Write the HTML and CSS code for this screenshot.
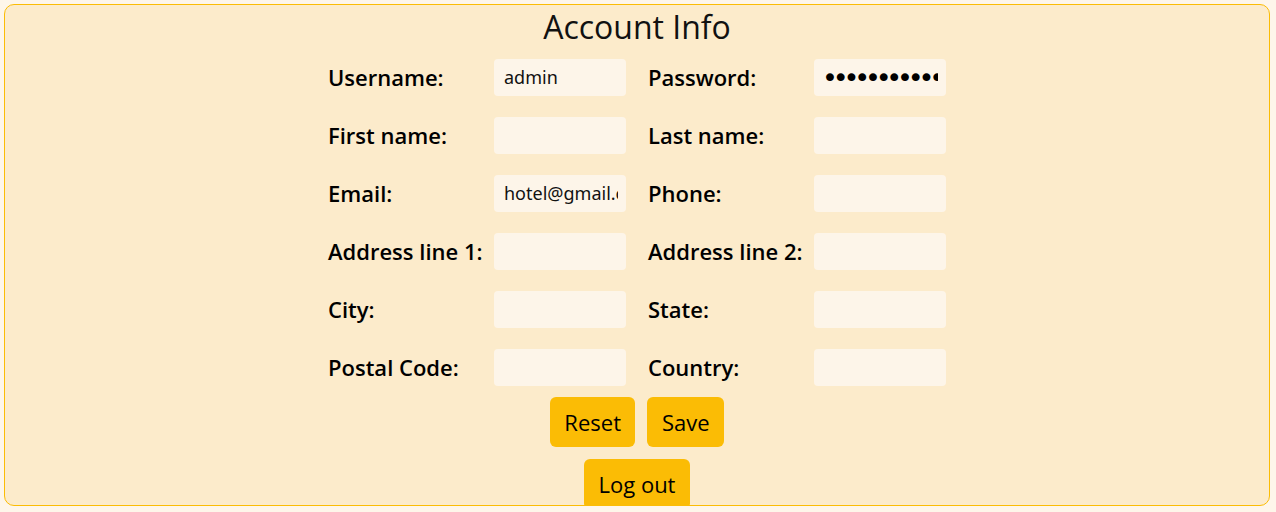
FILE: index.html
```html
<!DOCTYPE html>
<html lang="en">
<head>
<meta charset="utf-8">
<title>Account Info</title>
<link rel="stylesheet" href="styles.css">
</head>
<body>
<main class="card">
  <h1 class="title">Account Info</h1>
  <form class="form">
    <div class="grid">
      <label class="label" for="username">Username:</label>
      <input class="input" id="username" type="text" value="admin">
      <label class="label" for="password">Password:</label>
      <input class="input input-secret" id="password" type="password" value="admin1234567890">

      <label class="label" for="first">First name:</label>
      <input class="input" id="first" type="text">
      <label class="label" for="last">Last name:</label>
      <input class="input" id="last" type="text">

      <label class="label" for="email">Email:</label>
      <input class="input" id="email" type="text" value="hotel@gmail.com">
      <label class="label" for="phone">Phone:</label>
      <input class="input" id="phone" type="text">

      <label class="label" for="addr1">Address line 1:</label>
      <input class="input" id="addr1" type="text">
      <label class="label" for="addr2">Address line 2:</label>
      <input class="input" id="addr2" type="text">

      <label class="label" for="city">City:</label>
      <input class="input" id="city" type="text">
      <label class="label" for="state">State:</label>
      <input class="input" id="state" type="text">

      <label class="label" for="postal">Postal Code:</label>
      <input class="input" id="postal" type="text">
      <label class="label" for="country">Country:</label>
      <input class="input" id="country" type="text">
    </div>
    <div class="actions actions-first">
      <button class="btn" type="reset">Reset</button>
      <button class="btn" type="button">Save</button>
    </div>
    <div class="actions">
      <button class="btn" type="button">Log out</button>
    </div>
  </form>
</main>
</body>
</html>
```
FILE: styles.css
```css
html, body {
  background: #fef6ea;
}
body {
  margin: 4px;
  font-family: "Open Sans", "Noto Sans", sans-serif;
  color: #000;
}
.card {
  box-sizing: border-box;
  width: 1266px;
  height: 502px;
  background: #fcebcb;
  border: 1px solid #fbbc05;
  border-radius: 10px;
  overflow: hidden;
  display: flex;
  flex-direction: column;
  align-items: center;
}
.title {
  margin: 0;
  font-size: 32px;
  font-weight: 400;
  line-height: 44px;
  color: #111;
}
.form {
  display: flex;
  flex-direction: column;
  align-items: center;
  margin-top: -1px;
}
.grid {
  display: grid;
  grid-template-columns: 166px 154px 166px 132px;
  grid-auto-rows: 58px;
  align-items: center;
}
.label {
  font-size: 22px;
  font-weight: 600;
  line-height: 30px;
  white-space: nowrap;
}
.input {
  box-sizing: border-box;
  width: 132px;
  height: 37px;
  border: none;
  outline: none;
  border-radius: 4px;
  background: #fdf5e9;
  padding: 0 8px 0 10px;
  font-family: "Noto Sans", "Open Sans", sans-serif;
  font-size: 18px;
  color: #111;
}
.input-secret {
  font-family: "DejaVu Sans", sans-serif;
  font-size: 27px;
  letter-spacing: -5.2px;
  padding-left: 8px;
  color: #000;
}
.actions {
  display: flex;
  gap: 12px;
  justify-content: center;
  margin-bottom: 12px;
}
.actions-first {
  margin-top: 1px;
}
.btn {
  background: #fbbc05;
  border: none;
  border-radius: 6px;
  padding: 10px 14.5px;
  font-family: "Open Sans", "Noto Sans", sans-serif;
  font-size: 22px;
  line-height: 30px;
  color: #000;
  cursor: pointer;
}
```
